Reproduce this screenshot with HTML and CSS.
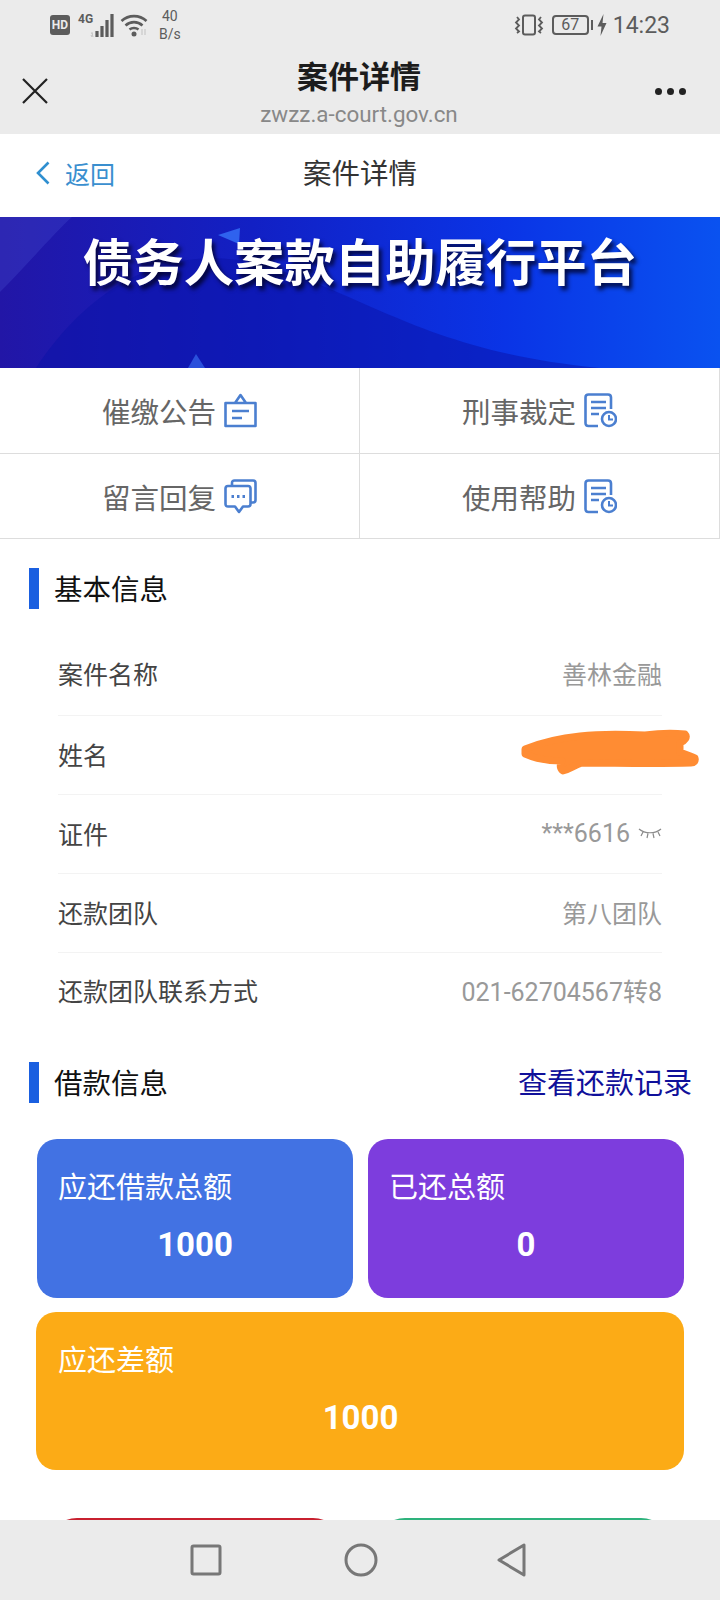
FILE: index.html
```html
<!DOCTYPE html>
<html lang="zh-CN">

<head>
    <meta charset="UTF-8" />
    <meta name="viewport" content="width=device-width, initial-scale=1.0" />
    <title>案件详情</title>
    <link rel="stylesheet" href="styles.css">
</head>

<body>
    <div class="phone">
        <div class="status-bar">
            <div class="status-left">
                <span class="hd">HD</span>
                <span class="net-type">4G</span>
                <svg class="signal" width="24" height="28" viewBox="0 0 24 28">
                    <path d="M1 21H3M1 23l1 2M3 25l-1-4" stroke="#c4c4c4" stroke-width="1" fill="none" />
                    <path d="M7 19v6M12 14v11M17 8v17M22 2v23" stroke="#5c5c5c" stroke-width="3.200" fill="none" />
                </svg>
                <svg class="wifi" width="28" height="24" viewBox="0 0 28 24">
                    <path d="M1.500 8C8.500 1.500 19.500 1.500 26.500 8M5.500 12.500C10.500 8 17.500 8 22.500 12.500M9.500 16.500C12 14.500 16 14.500 18.500 16.500" stroke="#5c5c5c" stroke-width="2.600" fill="none" />
                    <circle cx="14" cy="21" r="2.500" fill="#5c5c5c" />
                    <path d="M22 16v6M25 16v6" stroke="#cfcfcf" stroke-width="1.500" fill="none" />
                </svg>
                <div class="speed"><span>40</span><span>B/s</span></div>
            </div>
            <div class="status-right">
                <svg width="30" height="22" viewBox="0 0 30 22">
                    <rect x="9" y="1.500" width="12" height="19" rx="2" stroke="#5c5c5c" stroke-width="2" fill="none" />
                    <path d="M3 3l2 2.500-3 3 3 3-3 3 3 3-2 1.500M27 3l-2 2.500 3 3-3 3 3 3-3 3 2 1.500" stroke="#5c5c5c" stroke-width="1.800" fill="none" />
                </svg>
                <span class="battery">67</span>
                <span class="battery-nub"></span>
                <svg width="10" height="22" viewBox="0 0 10 22">
                    <path d="M6.500 0L0.500 12.500H4.500L3.500 22L9.500 9H5.500Z" fill="#5c5c5c" />
                </svg>
                <span class="time">14:23</span>
            </div>
        </div>

        <div class="app-header">
            <svg class="close-icon" width="28" height="28" viewBox="0 0 28 28">
                <path d="M2 2L26 26M26 2L2 26" stroke="#222" stroke-width="2.200" fill="none" />
            </svg>
            <div class="app-title">
                <div class="app-name">案件详情</div>
                <div class="app-url">zwzz.a-court.gov.cn</div>
            </div>
            <div class="more-dots"><i></i><i></i><i></i></div>
        </div>

        <div class="main">
            <div class="top-nav">
                <div class="back">
                    <svg width="14" height="24" viewBox="0 0 14 24">
                        <path d="M12.500 1.500L2 12L12.500 22.500" stroke="#2f8fd0" stroke-width="2.600" fill="none" />
                    </svg>
                    <span>返回</span>
                </div>
                <div class="top-nav-title">案件详情</div>
            </div>

            <div class="banner">
                <svg class="banner-art" width="720" height="151" viewBox="0 0 720 151" preserveAspectRatio="none">
                    <path d="M0 75C30 45 55 15 72 0H0Z" fill="#4a4fd0" opacity="0.3" />
                    <path d="M36 151C90 70 170 20 270 50C370 80 430 135 600 151Z" fill="#0a12a8" opacity="0.5" />
                    <path d="M218 18L240 11L239 27Z" fill="#2f62ee" />
                    <path d="M188 151L196 137L205 151Z" fill="#2a50dc" />
                </svg>
                <h1 class="banner-title">债务人案款自助履行平台</h1>
            </div>

            <div class="link-grid">
                <div class="link-cell">
                    <span>催缴公告</span>
                    <svg width="33" height="35" viewBox="0 0 33 35">
                        <path d="M1.500 10H31.500V33H1.500ZM11 10L16.500 2L22 10" stroke="#4b7fd0" stroke-width="2.600" stroke-linejoin="round" fill="none" />
                        <path d="M8 18H25M8 25H18" stroke="#4b7fd0" stroke-width="2.600" fill="none" />
                    </svg>
                </div>
                <div class="link-cell">
                    <span>刑事裁定</span>
                    <svg width="33" height="35" viewBox="0 0 33 35">
                        <path d="M14 33H4.500Q1.500 33 1.500 30V4.500Q1.500 1.500 4.500 1.500H24Q27 1.500 27 4.500V16" stroke="#4b7fd0" stroke-width="2.600" fill="none" />
                        <path d="M7 9H22M7 15H22M7 21H15" stroke="#4b7fd0" stroke-width="2.600" fill="none" />
                        <circle cx="25" cy="26" r="7" stroke="#4b7fd0" stroke-width="2.600" fill="#fff" />
                        <path d="M25 22V26.500H29" stroke="#4b7fd0" stroke-width="2" fill="none" />
                    </svg>
                </div>
                <div class="link-cell">
                    <span>留言回复</span>
                    <svg width="33" height="35" viewBox="0 0 33 35">
                        <path d="M8 7V4Q8 1.500 10.500 1.500H29Q31.500 1.500 31.500 4V21Q31.500 23.500 29 23.500H27" stroke="#4b7fd0" stroke-width="2.600" fill="none" />
                        <path d="M4 7H24Q26.500 7 26.500 9.500V25Q26.500 27.500 24 27.500H19L15 33L11 27.500H4Q1.500 27.500 1.500 25V9.500Q1.500 7 4 7Z" stroke="#4b7fd0" stroke-width="2.600" stroke-linejoin="round" fill="#fff" />
                        <path d="M7.500 17.500H10M13 17.500H15.500M18.500 17.500H21" stroke="#4b7fd0" stroke-width="3" fill="none" />
                    </svg>
                </div>
                <div class="link-cell">
                    <span>使用帮助</span>
                    <svg width="33" height="35" viewBox="0 0 33 35">
                        <path d="M14 33H4.500Q1.500 33 1.500 30V4.500Q1.500 1.500 4.500 1.500H24Q27 1.500 27 4.500V16" stroke="#4b7fd0" stroke-width="2.600" fill="none" />
                        <path d="M7 9H22M7 15H22M7 21H15" stroke="#4b7fd0" stroke-width="2.600" fill="none" />
                        <circle cx="25" cy="26" r="7" stroke="#4b7fd0" stroke-width="2.600" fill="#fff" />
                        <path d="M25 22V26.500H29" stroke="#4b7fd0" stroke-width="2" fill="none" />
                    </svg>
                </div>
            </div>

            <div class="section-head">
                <h2>基本信息</h2>
            </div>

            <div class="info-list">
                <div class="info-row">
                    <span>案件名称</span>
                    <span class="info-value">善林金融</span>
                </div>
                <div class="info-row">
                    <span>姓名</span>
                    <svg class="scribble" width="180" height="48" viewBox="0 0 180 48">
                        <path d="M5 21C20 15 40 10 60 8C85 5 105 6 125 7C140 5 155 5 165 6C168 9 165 13 160 15V24C166 27 172 28 175 30C176 33 174 35 171 35C130 36 95 35 62 35C55 37 50 41 43 43C39 40 40 36 42 33C28 33 14 30 5 26Z" fill="#ff8c33" stroke="#ff8c33" stroke-width="7" stroke-linejoin="round" />
                    </svg>
                </div>
                <div class="info-row">
                    <span>证件</span>
                    <span class="info-value">***6616
                        <svg class="eye" width="24" height="12" viewBox="0 0 24 12">
                            <path d="M1 2C7 7 17 7 23 2M5 5L3 9M10 6.500L9 11M15 6.500L16 11M20 5L22 9" stroke="#8a8a8a" stroke-width="1.200" fill="none" />
                        </svg>
                    </span>
                </div>
                <div class="info-row">
                    <span>还款团队</span>
                    <span class="info-value">第八团队</span>
                </div>
                <div class="info-row">
                    <span>还款团队联系方式</span>
                    <span class="info-value">021-62704567转8</span>
                </div>
            </div>

            <div class="section-head section-loan">
                <h2>借款信息</h2>
                <span class="record-link">查看还款记录</span>
            </div>

            <div class="cards">
                <div class="card card-blue">
                    <div class="card-label">应还借款总额</div>
                    <div class="card-num">1000</div>
                </div>
                <div class="card card-purple">
                    <div class="card-label">已还总额</div>
                    <div class="card-num">0</div>
                </div>
                <div class="card card-orange">
                    <div class="card-label">应还差额</div>
                    <div class="card-num">1000</div>
                </div>
            </div>

            <div class="action-btns">
                <div class="action-btn btn-red"></div>
                <div class="action-btn btn-green"></div>
            </div>
        </div>

        <div class="nav-bar">
            <svg width="32" height="32" viewBox="0 0 32 32">
                <rect x="2" y="2" width="28" height="28" rx="1.500" stroke="#777" stroke-width="3" fill="none" />
            </svg>
            <svg width="34" height="34" viewBox="0 0 34 34">
                <circle cx="17" cy="17" r="15" stroke="#777" stroke-width="3" fill="none" />
            </svg>
            <svg class="nav-back" width="32" height="34" viewBox="0 0 32 34">
                <path d="M28 2V32L3 17Z" stroke="#777" stroke-width="3" stroke-linejoin="round" fill="none" />
            </svg>
        </div>
    </div>
</body>

</html>
```

FILE: styles.css
```css
* {
    box-sizing: border-box;
}

body {
    margin: 0;
    font-family: Roboto, 'Noto Sans CJK SC', sans-serif;
    background-color: #fff;
}

.phone {
    width: 720px;
    height: 1600px;
    display: flex;
    flex-direction: column;
    overflow: hidden;
}

/* status bar */
.status-bar {
    height: 50px;
    flex: none;
    background-color: #ebebeb;
    color: #5c5c5c;
    display: flex;
    justify-content: space-between;
    align-items: center;
    padding: 0 50px;
}

.status-left,
.status-right {
    display: flex;
    align-items: center;
}

.hd {
    width: 20px;
    height: 20px;
    background-color: #5c5c5c;
    color: #ebebeb;
    border-radius: 3px;
    font-size: 12px;
    font-weight: 700;
    line-height: 20px;
    text-align: center;
}

.net-type {
    margin: -12px 0 0 8px;
    font-size: 12px;
    font-weight: 700;
    width: 12px;
}

.signal {
    margin-top: 2px;
}

.wifi {
    margin-left: 6px;
}

.speed {
    display: flex;
    flex-direction: column;
    align-items: center;
    margin-left: 11px;
    font-size: 14px;
    line-height: 18px;
}

.battery {
    width: 37px;
    height: 20px;
    margin-left: 8px;
    border: 2px solid #5c5c5c;
    border-radius: 4px;
    font-size: 16px;
    line-height: 16px;
    text-align: center;
}

.battery-nub {
    width: 2px;
    height: 10px;
    margin: 0 4px 0 2px;
    background-color: #5c5c5c;
}

.time {
    margin-left: 6px;
    font-size: 23px;
}

/* browser header */
.app-header {
    height: 84px;
    flex: none;
    background-color: #ebebeb;
    display: flex;
    justify-content: space-between;
    align-items: center;
    padding: 0 34px 0 21px;
}

.close-icon {
    margin-top: -2px;
}

.app-title {
    text-align: center;
    margin-left: 14px;
}

.app-name {
    font-size: 31px;
    font-weight: 700;
    color: #1c1c1c;
    line-height: 44px;
}

.app-url {
    font-size: 22.4px;
    color: #888;
    line-height: 28px;
}

.more-dots {
    display: flex;
    gap: 5px;
    margin-top: -2px;
}

.more-dots i {
    width: 7px;
    height: 7px;
    border-radius: 50%;
    background-color: #222;
}

.main {
    flex: 1;
    min-height: 0;
    overflow: hidden;
}

/* page title bar */
.top-nav {
    position: relative;
    height: 83px;
    padding-bottom: 8px;
    display: flex;
    justify-content: center;
    align-items: center;
    background-color: #fff;
}

.back {
    position: absolute;
    left: 36px;
    top: 21px;
    display: flex;
    align-items: center;
    gap: 15px;
    font-size: 25px;
    color: #3a8fcf;
}

.top-nav-title {
    font-size: 28.5px;
    color: #333;
}

/* banner */
.banner {
    position: relative;
    height: 151px;
    background: linear-gradient(90deg, #2216a6 0%, #1220c4 35%, #0a34e6 70%, #0a52f0 100%);
    overflow: hidden;
}

.banner-art {
    position: absolute;
    left: 0;
    top: 0;
}

.banner-title {
    position: relative;
    margin: 0;
    padding-top: 8px;
    font-size: 50.4px;
    font-weight: 700;
    line-height: 78px;
    color: #fff;
    text-align: center;
    text-shadow: 3px 4px 4px rgba(0, 0, 30, 0.8);
}

/* link grid */
.link-grid {
    display: grid;
    grid-template-columns: 1fr 1fr;
    grid-template-rows: 86px 85px;
}

.link-cell {
    display: flex;
    justify-content: center;
    align-items: center;
    gap: 8px;
    border-right: 1px solid #ddd;
    border-bottom: 1px solid #ddd;
    font-size: 28.5px;
    color: #666;
}

/* sections */
.section-head {
    height: 41px;
    margin: 29px 28px 28px 29px;
    padding: 0 0 3px 15px;
    border-left: 10px solid #1a5fe0;
    display: flex;
    justify-content: space-between;
    align-items: center;
}

.section-loan {
    margin-top: 30px;
}

.section-head h2 {
    margin: 0;
    font-size: 28.5px;
    font-weight: 400;
    color: #111;
}

.record-link {
    font-size: 29px;
    color: #10109a;
}

.info-list {
    padding: 0 58px;
}

.info-row {
    position: relative;
    height: 79px;
    padding-bottom: 2px;
    display: flex;
    justify-content: space-between;
    align-items: center;
    border-bottom: 1px solid #f3f3f3;
    font-size: 25px;
    color: #444;
}

.info-row:first-child,
.info-row:last-child {
    padding-bottom: 6px;
}

.info-row:last-child {
    border-bottom: none;
}

.info-value {
    display: flex;
    align-items: center;
    gap: 8px;
    color: #999;
}

.scribble {
    position: absolute;
    right: -38px;
    top: 12px;
}

/* money cards */
.cards {
    display: grid;
    grid-template-columns: 316px 316px;
    gap: 14px 15px;
    margin: 36px 0 0 37px;
}

.card {
    height: 159px;
    padding: 29px 21px 0;
    border-radius: 20px;
    color: #fff;
}

.card-label {
    font-size: 29px;
    line-height: 40px;
}

.card-num {
    margin-top: 17px;
    font-size: 33px;
    font-weight: 700;
    line-height: 40px;
    text-align: center;
}

.card-blue {
    background-color: #4272e3;
}

.card-purple {
    background-color: #7d3ddd;
}

.card-orange {
    grid-column: 1 / 3;
    height: 158px;
    margin-left: -1px;
    padding-left: 22px;
    background-color: #fcab16;
}

.action-btns {
    display: flex;
    gap: 32px;
    margin: 48px 0 0 47px;
}

.action-btn {
    width: 296px;
    height: 60px;
    border-radius: 30px;
}

.btn-red {
    background-color: #c8202f;
}

.btn-green {
    background-color: #2eb27c;
}

/* android nav */
.nav-bar {
    height: 80px;
    flex: none;
    background-color: #ebebeb;
    display: flex;
    align-items: center;
    justify-content: center;
    gap: 122px;
    padding-right: 2px;
}

.nav-back {
    margin-left: -4px;
}
```
